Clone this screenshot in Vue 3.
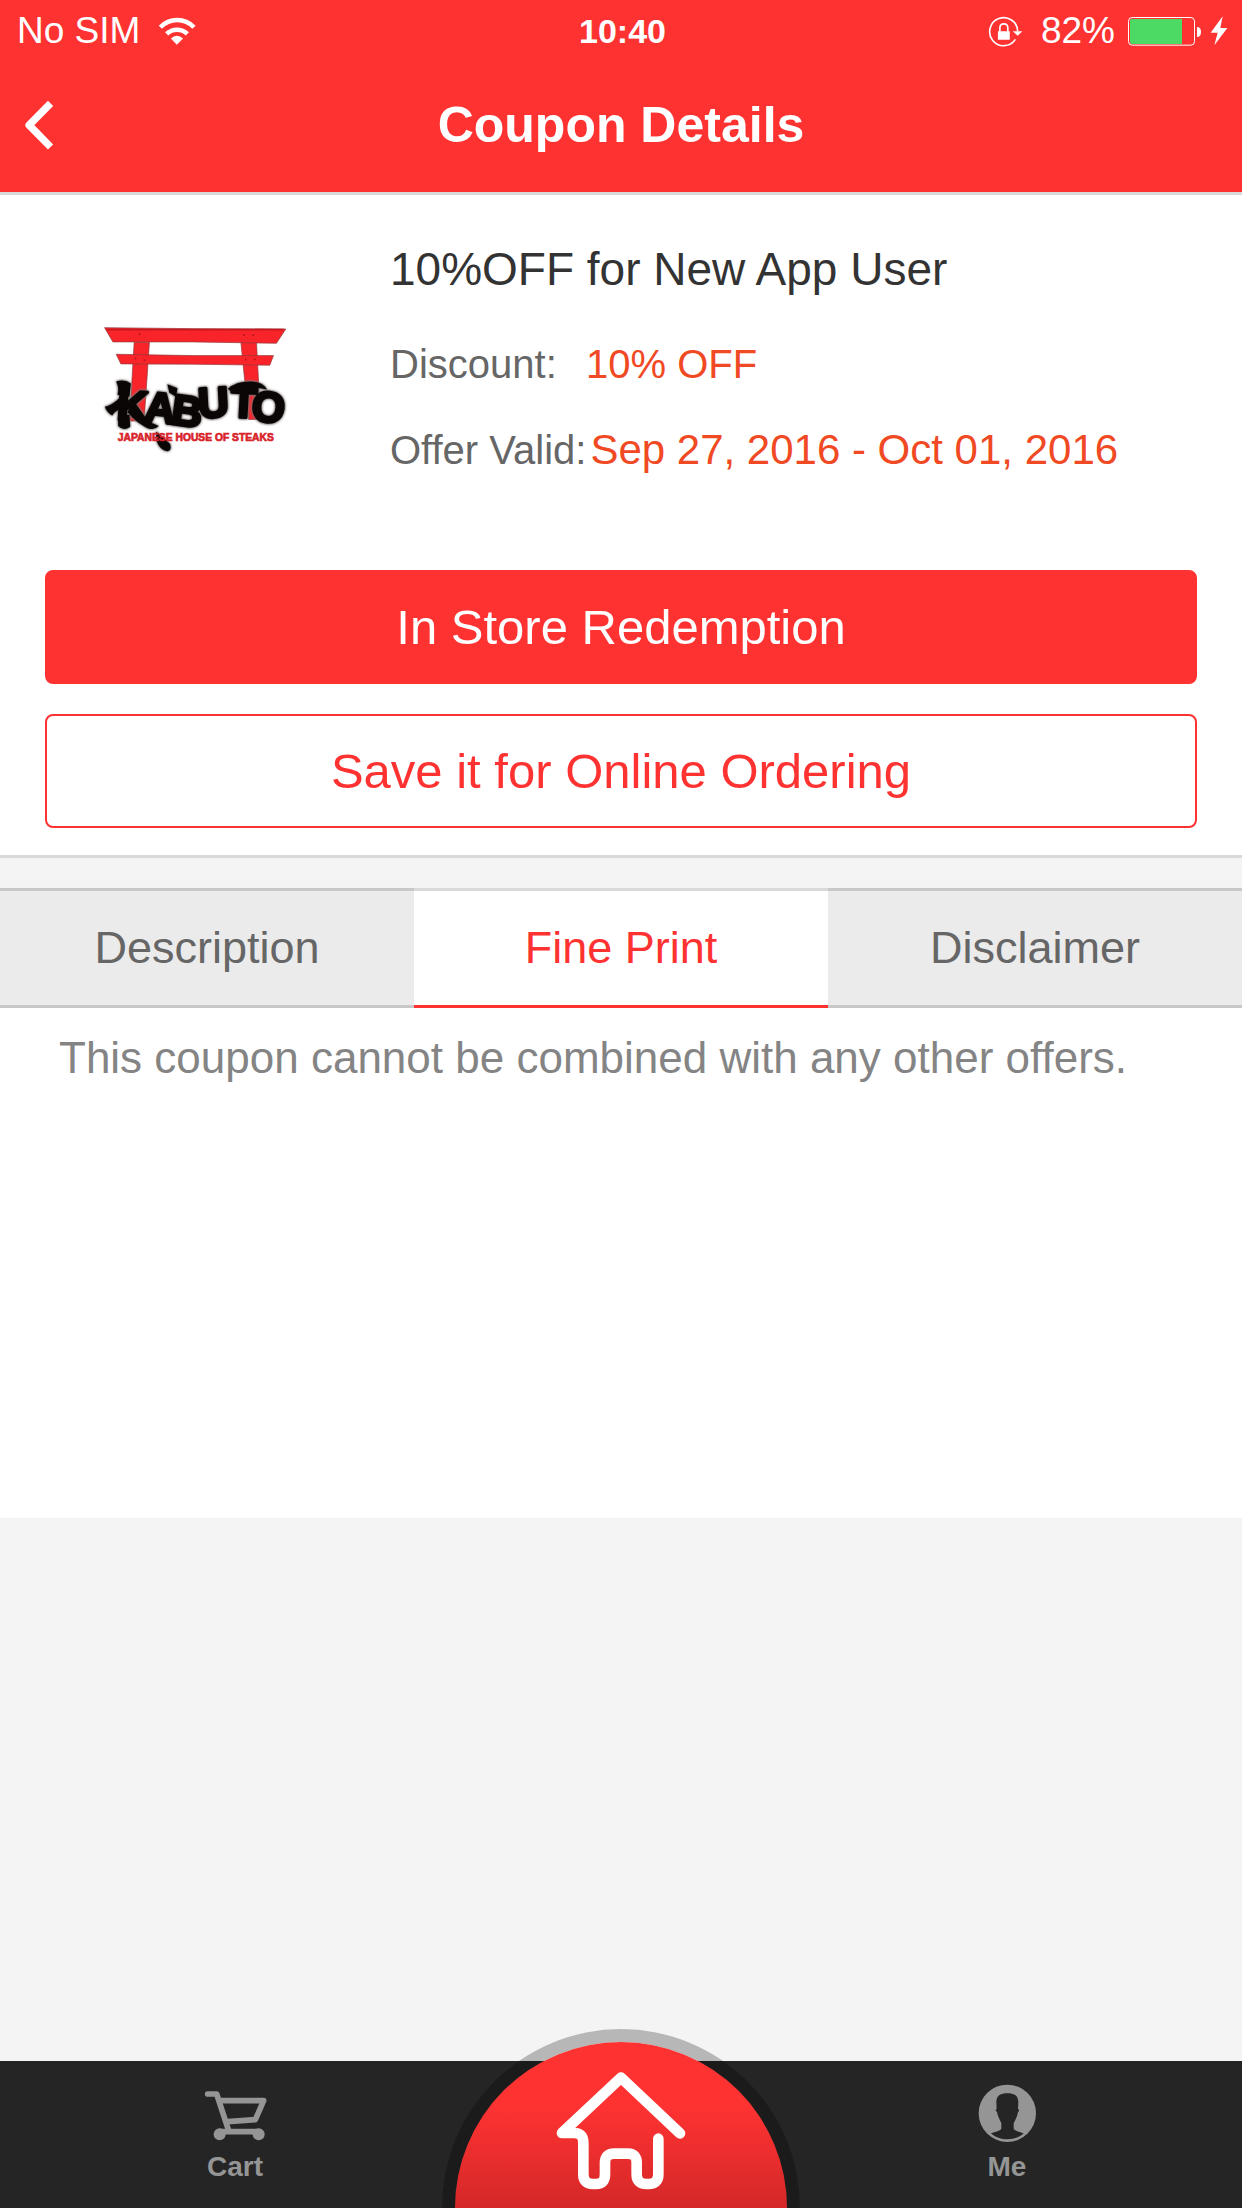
<!-- views/CouponDetails.vue -->
<script setup>
import { computed, ref } from "vue";

const coupon = {
  title: "10%OFF for New App User",
  discount: "10% OFF",
  valid: "Sep 27, 2016 - Oct 01, 2016",
};

const tabs = [
  { id: "description", label: "Description", text: "10%OFF for New App User" },
  { id: "fine-print", label: "Fine Print", text: "This coupon cannot be combined with any other offers." },
  { id: "disclaimer", label: "Disclaimer", text: "" },
];

const activeTab = ref("fine-print");
const activeText = computed(() => tabs.find((t) => t.id === activeTab.value).text);
</script>

<template>
  <div class="page">
    <header class="header">
      <div class="status-bar">
        <div class="status-left">
          <span>No SIM</span>
          <svg class="wifi" viewBox="475 45 115 88" fill="none" stroke="#fff" stroke-width="14">
            <path d="M482 76A70 70 0 0 1 584 76" />
            <path d="M501 96A46 46 0 0 1 564 96" />
            <path d="M532 129L514 110Q532 94 551 110Z" fill="#fff" stroke="none" />
          </svg>
        </div>
        <span class="time">10:40</span>
        <div class="status-right">
          <svg class="lock" viewBox="84 42 106 94" fill="none" stroke="#fff" stroke-width="5">
            <path d="M167 113A42.5 42.5 0 1 1 174 88" />
            <path d="M120 90V78Q120 66 132 66Q144 66 144 78V90" />
            <path d="M114 88H150V114H114ZM159 88H188L174 102Z" fill="#fff" stroke="none" />
          </svg>
          <span class="percent">82%</span>
          <svg class="battery" viewBox="504 45 222 90">
            <rect x="505.5" y="49.5" width="198" height="83" rx="11" fill="none" stroke="#fff" stroke-width="3" />
            <path d="M516 54H666V129H516Q510 129 510 123V60Q510 54 516 54Z" fill="#4cd964" />
            <path d="M711 78Q723 78 723 93Q723 108 711 108Z" fill="#fff" />
          </svg>
          <svg class="bolt" viewBox="750 45 54 90">
            <path d="M788 46L752 95H773L763 133L802 81H781Z" fill="#fff" />
          </svg>
        </div>
      </div>
      <div class="nav">
        <button class="back" type="button" aria-label="Back">
          <svg viewBox="70 300 95 155" fill="none" stroke="#fff" stroke-width="22" stroke-linejoin="round">
            <path d="M152 313L88 378L152 443" />
          </svg>
        </button>
        <h1>Coupon Details</h1>
      </div>
    </header>

    <main class="content">
      <section class="card">
        <div class="details">
          <div class="logo">
            <svg viewBox="30 40 570 400" role="img" aria-label="Kabuto Japanese House of Steaks">
              <!-- torii gate -->
              <g fill="#f8242a" stroke="#8d3a3c" stroke-width="2">
                <path d="M132 98H178L162 335H118Z" />
                <path d="M453 98H500L512 330H476Z" />
                <path d="M78 134L310 138L551 138L540 167L310 164L92 163Z" />
                <path d="M43 54L310 57L588 58L560 101L310 97L68 97Z" />
              </g>
              <path d="M48 60H582" stroke="#c41a20" stroke-width="5" />
              <g fill="#b3161b">
                <circle cx="148" cy="74" r="3" />
                <circle cx="462" cy="76" r="3" />
                <circle cx="490" cy="76" r="3" />
                <circle cx="136" cy="147" r="3" />
                <circle cx="163" cy="152" r="3" />
                <circle cx="468" cy="150" r="3" />
                <circle cx="495" cy="150" r="3" />
              </g>
              <!-- brush lettering with its loose strokes -->
              <g class="brush">
                <path d="M78 216Q104 208 122 222L118 262L82 256Q88 236 78 216Z" />
                <path d="M44 292Q66 288 92 262L100 296Q76 302 66 318Q52 312 44 292Z" />
                <path d="M84 318L118 316L120 352Q100 366 84 350Z" />
                <path d="M122 290Q164 334 206 350Q190 366 168 354Q136 338 112 308Z" />
                <path d="M198 366Q222 386 240 404Q246 424 232 426Q210 424 200 396Z" />
                <path d="M232 224L262 236L258 262L238 250Z" />
                <path d="M414 238Q440 214 486 216Q520 218 532 240Q480 228 440 240Q424 250 414 238Z" />
                <text
                  class="name"
                  x="78 160 240 326 420 482"
                  y="330 334 342 326 322 332"
                  rotate="4 6 8 -3 3 6"
                >KABUTO</text>
              </g>
              <text class="tagline" x="83" y="396">JAPANESE HOUSE OF STEAKS</text>
            </svg>
          </div>
          <div class="info">
            <h2>{{ coupon.title }}</h2>
            <dl>
              <div class="row">
                <dt>Discount:</dt>
                <dd>{{ coupon.discount }}</dd>
              </div>
              <div class="row">
                <dt>Offer Valid:</dt>
                <dd class="dates">{{ coupon.valid }}</dd>
              </div>
            </dl>
          </div>
        </div>
        <div class="actions">
          <button class="btn primary" type="button">In Store Redemption</button>
          <button class="btn outline" type="button">Save it for Online Ordering</button>
        </div>
      </section>

      <section class="more">
        <div class="tabs" role="tablist">
          <button
            v-for="tab in tabs"
            :id="tab.id"
            :key="tab.id"
            class="tab"
            :class="{ active: tab.id === activeTab }"
            type="button"
            role="tab"
            :aria-selected="tab.id === activeTab"
            @click="activeTab = tab.id"
          >
            {{ tab.label }}
          </button>
        </div>
        <div class="panel" role="tabpanel" :aria-labelledby="activeTab">
          <p>{{ activeText }}</p>
        </div>
      </section>
    </main>

    <nav class="footer">
      <a href="#cart" class="item">
        <svg class="cart" viewBox="60 150 195 162" fill="none" stroke="#959595" stroke-width="17" stroke-linecap="round" stroke-linejoin="round">
          <path d="M74 165H101L136 272" />
          <path d="M112 185H242L217 242L134 248" />
          <path d="M110 278H227" />
          <g fill="#959595" stroke="none">
            <circle cx="110" cy="286" r="18" />
            <circle cx="227" cy="286" r="18" />
          </g>
        </svg>
        <span>Cart</span>
      </a>
      <a href="#home" class="home" aria-label="Home">
        <svg viewBox="375 180 396 366" fill="none" stroke="#fff" stroke-width="32" stroke-linecap="round" stroke-linejoin="round">
          <path d="M750 370L573 203L396 369H432Q460 369 460 398V493Q460 522 489 522H498Q525 522 525 493V458Q525 431 552 431H594Q620 431 620 458V493Q620 522 649 522H656Q685 522 685 493V386" />
        </svg>
      </a>
      <a href="#me" class="item me">
        <svg class="avatar" viewBox="115 133 177 177">
          <circle cx="203" cy="221" r="86" fill="#959595" />
          <path
            d="M172 217C167 214 167 210 171 208L170 188C170 166 184 161 203 161C222 161 236 166 236 188L235 208C239 210 239 214 235 217C233 230 228 240 222 250V266C222 274 240 276 252 281C240 293 220 299 203 299C186 299 167 293 154 281C166 276 185 274 185 266V250C180 240 174 230 172 217Z"
            fill="#252525"
          />
        </svg>
        <span>Me</span>
      </a>
    </nav>
  </div>
</template>

<style>
body {
  margin: 0;
  background: #f4f4f4;
}
</style>

<style scoped>
.page {
  display: flex;
  flex-direction: column;
  min-height: 100vh;
  overflow: hidden;
  background: #f4f4f4;
  font-family: "Liberation Sans", Arial, sans-serif;
}

button {
  font-family: inherit;
  cursor: pointer;
}

svg {
  display: block;
}

.header {
  padding-bottom: 4px;
  background: #ff3232;
  border-bottom: 3px solid #d9d9d9;
  color: #fff;
}

.status-bar {
  display: grid;
  grid-template-columns: 1fr auto 1fr;
  align-items: center;
  height: 62px;
  padding: 0 14px 0 17px;
  font-size: 37px;
}

.status-left,
.status-right {
  display: flex;
  align-items: center;
}

.status-left {
  gap: 18px;
}

.status-right {
  justify-content: flex-end;
}

.time {
  font-size: 34px;
  font-weight: bold;
}

.wifi {
  width: 38px;
  height: 29px;
}

.lock {
  width: 35px;
  height: 31px;
}

.percent {
  margin: 0 13px 0 18px;
}

.battery {
  width: 74px;
  height: 30px;
  margin-right: 8px;
}

.bolt {
  width: 18px;
  height: 30px;
}

.nav {
  display: grid;
  grid-template-columns: 120px 1fr 120px;
  align-items: center;
  height: 126px;
}

.nav h1 {
  margin: 0;
  font-size: 50px;
  text-align: center;
}

.back {
  height: 100%;
  padding: 0 23px;
  background: none;
  border: none;
}

.back svg {
  width: 32px;
  height: 52px;
}

.content {
  flex: 1;
}

.card {
  padding-bottom: 27px;
  background: #fff;
  border-bottom: 3px solid #d9d9d9;
}

.details {
  display: flex;
  padding: 34px 0 77px;
}

.logo {
  display: flex;
  justify-content: center;
  width: 390px;
  padding-top: 94px;
  box-sizing: border-box;
}

.logo svg {
  width: 190px;
  height: 133px;
}

.brush {
  fill: #0a0606;
  filter: drop-shadow(0 0 3px #6b6463) drop-shadow(0 0 3px #8b8483);
}

.name {
  stroke: #0a0606;
  stroke-width: 9px;
  stroke-linejoin: round;
  font-size: 128px;
  font-weight: bold;
}

.tagline {
  fill: #d8232a;
  stroke: #d8232a;
  stroke-width: 2px;
  font-size: 31px;
  font-weight: bold;
}

.info {
  flex: 1;
}

.info h2 {
  margin: 0 0 12px;
  color: #333;
  font-size: 46px;
  font-weight: normal;
  line-height: 80px;
}

.info dl {
  margin: 0;
}

.row {
  display: flex;
  align-items: baseline;
  gap: 4px;
  font-size: 40px;
  line-height: 86px;
}

.row dt {
  min-width: 192px;
  color: #666;
}

.row dd {
  margin: 0;
  color: #f04923;
}

.row .dates {
  font-size: 42px;
}

.actions {
  display: flex;
  flex-direction: column;
  gap: 30px;
  padding: 0 45px;
}

.btn {
  height: 114px;
  border: 2px solid #ff3232;
  border-radius: 8px;
  font-size: 49px;
}

.primary {
  background: #ff3232;
  color: #fff;
}

.outline {
  background: #fff;
  color: #ff3232;
}

.more {
  margin-top: 30px;
}

.tabs {
  display: flex;
}

.tab {
  flex: 1;
  height: 120px;
  padding: 0;
  background: #ebebeb;
  border: solid #c8c8c8;
  border-width: 3px 0;
  color: #666;
  font-size: 45px;
}

.tab.active {
  background: #fff;
  border-top-color: #d9d9d9;
  border-bottom-color: #ff3232;
  color: #ff3232;
}

.panel {
  min-height: 510px;
  padding: 20px 59px;
  box-sizing: border-box;
  background: #fff;
}

.panel p {
  margin: 0;
  color: #848484;
  font-size: 44px;
  line-height: 60px;
}

.footer {
  display: grid;
  grid-template-columns: 1fr 302px 1fr;
  grid-template-rows: 147px;
  background: #252525;
}

.item {
  display: flex;
  flex-direction: column;
  align-items: center;
  justify-content: flex-end;
  padding-bottom: 25px;
  color: #959595;
  font-size: 28px;
  font-weight: bold;
  line-height: 32px;
  text-decoration: none;
}

.cart {
  width: 65px;
  height: 54px;
  margin-bottom: 8px;
}

.avatar {
  width: 59px;
  height: 59px;
  margin-bottom: 8px;
}

/* half-disc that rises above the bar */
.home {
  align-self: end;
  justify-self: center;
  display: flex;
  justify-content: center;
  width: 332px;
  height: 166px;
  padding-top: 28px;
  box-sizing: border-box;
  border-radius: 166px 166px 0 0;
  background: linear-gradient(#ff3232 38%, #d42828);
  box-shadow: 0 0 0 13px rgba(0, 0, 0, 0.25);
}

.home svg {
  width: 132px;
  height: 122px;
}
</style>
